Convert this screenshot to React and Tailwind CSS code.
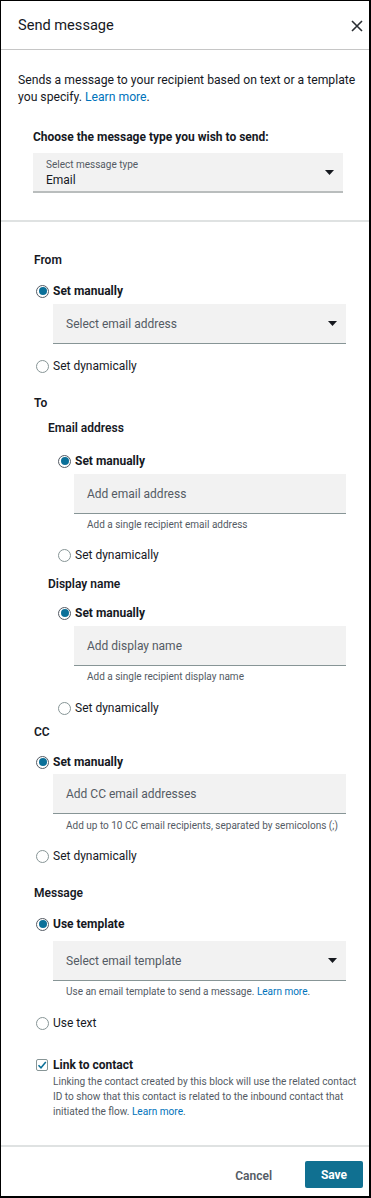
import React from 'react'

function Caret() {
  return (
    <svg width="9" height="5" viewBox="0 0 9 5" className="shrink-0">
      <polygon points="0,0 9,0 4.5,5" fill="#16191f" />
    </svg>
  )
}

function Radio({ checked }) {
  if (checked) {
    return (
      <span className="w-[13px] h-[13px] rounded-full border border-[#545b64] bg-white flex items-center justify-center shrink-0">
        <span className="w-[8px] h-[8px] rounded-full bg-[#0b7099]" />
      </span>
    )
  }
  return <span className="w-[13px] h-[13px] rounded-full border border-[#879596] bg-white shrink-0" />
}

function RadioRow({ checked, label, className = '' }) {
  return (
    <div className={`h-[20px] flex items-center ${className}`}>
      <span className="ml-[2px] mr-[4px] flex"><Radio checked={checked} /></span>
      <span className={checked ? 'font-bold text-[#16191f]' : 'text-[#16191f]'}>{label}</span>
    </div>
  )
}

function Field({ text, arrow, className = '' }) {
  return (
    <div className={`h-[40px] bg-[#f2f2f2] border-b border-[#879596] flex items-center justify-between pl-[13px] pr-[9px] ${className}`}>
      <span className="text-[12px] text-[#545b64]">{text}</span>
      {arrow && <Caret />}
    </div>
  )
}

function Helper({ children, className = '' }) {
  return (
    <div className={`h-[14px] flex items-center pl-[13px] text-[10px] text-[#545b64] whitespace-nowrap ${className}`}>
      {children}
    </div>
  )
}

function Label({ children, className = '' }) {
  return <div className={`h-[20px] flex items-center font-semibold text-[#16191f] ${className}`}>{children}</div>
}

export default function App() {
  return (
    <div className="w-[371px] h-[1198px] bg-white border-l border-t border-r-2 border-b-2 border-black flex flex-col font-[Roboto,sans-serif] text-[12px] text-[#16191f]">
      {/* header */}
      <div className="h-[49px] shrink-0 border-b border-[#c6c6c6] flex items-center justify-between pl-[17px] pr-[6px] pt-[2px]">
        <span className="text-[14.6px] text-[#16191f]">Send message</span>
        <svg width="12" height="12" viewBox="0 0 12 12">
          <path d="M1 1 L11 11 M11 1 L1 11" stroke="#2a2e33" strokeWidth="1.6" fill="none" />
        </svg>
      </div>

      <div className="flex-1">
        {/* intro */}
        <div className="pl-[17px] pt-[22px] pb-[27px] border-b-2 border-[#dfe2e2]">
          <p className="text-[12.2px] leading-[17px] whitespace-nowrap">
            Sends a message to your recipient based on text or a template
            <br />
            you specify. <span className="text-[#0073bb]">Learn more</span>.
          </p>
          <div className="ml-[15px] mt-[22px] h-[18px] flex items-center font-bold">Choose the message type you wish to send:</div>
          <div className="ml-[15px] mt-[7px] w-[310px] h-[40px] bg-[#f2f2f2] border-b-2 border-[#b9bdbd] flex items-center justify-between pl-[13px] pr-[9px]">
            <div className="flex flex-col pt-[1px]">
              <span className="text-[10px] leading-[14px] text-[#545b64]">Select message type</span>
              <span className="text-[12px] leading-[16px]">Email</span>
            </div>
            <Caret />
          </div>
        </div>

        {/* form */}
        <div className="pl-[33px] pr-[23px]">
          <Label className="mt-[28px]">From</Label>
          <RadioRow checked label="Set manually" className="mt-[11px]" />
          <Field text="Select email address" arrow className="ml-[19px] mt-[3px]" />
          <RadioRow label="Set dynamically" className="mt-[12px]" />

          <Label className="mt-[17px]">To</Label>
          <Label className="mt-[5px] ml-[14px]">Email address</Label>
          <RadioRow checked label="Set manually" className="mt-[13px] ml-[22px]" />
          <Field text="Add email address" className="ml-[40px] mt-[3px]" />
          <Helper className="ml-[40px] mt-[3px]">Add a single recipient email address</Helper>
          <RadioRow label="Set dynamically" className="mt-[14px] ml-[22px]" />

          <Label className="mt-[9px] ml-[14px]">Display name</Label>
          <RadioRow checked label="Set manually" className="mt-[9px] ml-[22px]" />
          <Field text="Add display name" className="ml-[40px] mt-[3px]" />
          <Helper className="ml-[40px] mt-[3px]">Add a single recipient display name</Helper>
          <RadioRow label="Set dynamically" className="mt-[15px] ml-[22px]" />

          <Label className="mt-[4px]">CC</Label>
          <RadioRow checked label="Set manually" className="mt-[10px]" />
          <Field text="Add CC email addresses" className="ml-[19px] mt-[2px]" />
          <Helper className="ml-[19px] mt-[4px]">Add up to 10 CC email recipients, separated by semicolons (;)</Helper>
          <RadioRow label="Set dynamically" className="mt-[14px]" />

          <Label className="mt-[17px]">Message</Label>
          <RadioRow checked label="Use template" className="mt-[11px]" />
          <Field text="Select email template" arrow className="ml-[19px] mt-[7px]" />
          <Helper className="ml-[19px] mt-[3px]">
            Use an email template to send a message.&nbsp;<span className="text-[#0073bb]">Learn more</span>.
          </Helper>
          <RadioRow label="Use text" className="mt-[15px]" />

          <div className="mt-[23px] h-[18px] flex items-center">
            <span className="ml-[2px] mr-[5px] w-[12px] h-[12px] rounded-[2px] border border-[#879596] flex items-center justify-center">
              <svg width="10" height="10" viewBox="0 0 10 10">
                <path d="M1.5 5.2 L4 7.8 L8.8 2" stroke="#0b7099" strokeWidth="1.5" fill="none" />
              </svg>
            </span>
            <span className="font-bold">Link to contact</span>
          </div>
          <p className="ml-[19px] text-[10.1px] leading-[15px] text-[#545b64] whitespace-nowrap">
            Linking the contact created by this block will use the related contact
            <br />
            ID to show that this contact is related to the inbound contact that
            <br />
            initiated the flow. <span className="text-[#0073bb]">Learn more</span>.
          </p>
        </div>
      </div>

      {/* footer */}
      <div className="h-[51px] shrink-0 border-t-2 border-[#dfe2e2] flex items-start justify-end pt-[14px] pr-[6px]">
        <span className="mt-[6px] mr-[33px] font-semibold text-[#545b64]">Cancel</span>
        <button className="w-[58px] h-[27px] rounded-[2px] bg-[#107091] text-white font-bold text-[12px]">Save</button>
      </div>
    </div>
  )
}
